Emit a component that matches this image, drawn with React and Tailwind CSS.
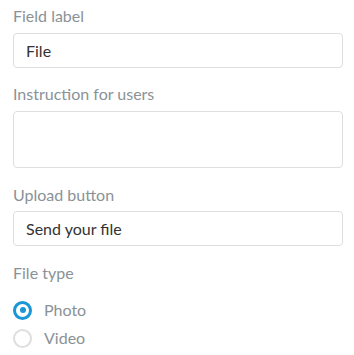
import { useState } from "react"

function Label({ children, className = "" }) {
  return <div className={`text-[16px] leading-5 text-[#8a9297] ${className}`}>{children}</div>
}

export default function App() {
  const [type, setType] = useState("photo")

  return (
    <div className="min-h-screen bg-white pl-[13px] pr-[11px] pt-[6px] font-['Lato',sans-serif]">
      <Label>Field label</Label>
      <input
        defaultValue="File"
        className="mt-[7px] block h-[35px] w-full rounded border border-[#dcdfe1] px-3 text-[16px] text-[#333] outline-none"
      />

      <Label className="mt-[16px]">Instruction for users</Label>
      <textarea className="mt-[7px] block h-[57px] w-full resize-none rounded border border-[#dcdfe1] px-3 py-2 text-[16px] text-[#333] outline-none" />

      <Label className="mt-[17px]">Upload button</Label>
      <input
        defaultValue="Send your file"
        className="mt-[6px] block h-[35px] w-full rounded border border-[#dcdfe1] px-3 text-[16px] text-[#333] outline-none"
      />

      <Label className="mt-[17px]">File type</Label>
      <div className="mt-[13px]">
        {[
          ["photo", "Photo"],
          ["video", "Video"],
        ].map(([value, text]) => (
          <label key={value} className="flex h-[28px] cursor-pointer items-center gap-[12px]">
            <span
              onClick={() => setType(value)}
              className={`flex h-[19px] w-[19px] items-center justify-center rounded-full ${
                type === value ? "border-[3px] border-[#1c96d4]" : "border-2 border-[#dedede]"
              }`}
            >
              {type === value && <span className="h-[6px] w-[6px] rounded-full bg-[#1c96d4]" />}
            </span>
            <span className="text-[16px] leading-5 text-[#8a9297]">{text}</span>
          </label>
        ))}
      </div>
    </div>
  )
}
